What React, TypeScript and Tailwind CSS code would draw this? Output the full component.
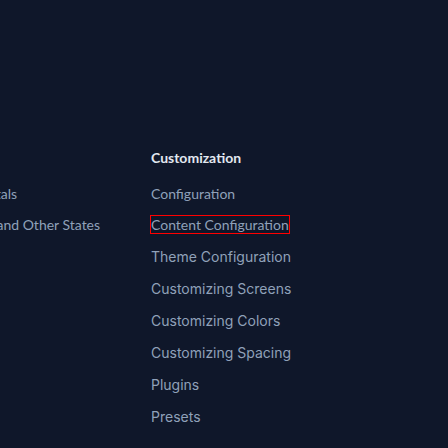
import React from "react";

const leftItems = ["Kit Fundamentals", "Hover, Focus, and Other States"];

const topItems = ["Configuration", "Content Configuration"];

const items = [
  "Theme Configuration",
  "Customizing Screens",
  "Customizing Colors",
  "Customizing Spacing",
  "Plugins",
  "Presets",
];

const App = () => {
  return (
    <div className="w-full h-screen overflow-hidden bg-[#0f172a] text-sm text-slate-400">
      <div className="flex pt-[148px]">
        <div className="shrink-0 w-[151px] overflow-hidden">
          <ul className="-ml-[90px] pt-[30px] whitespace-nowrap font-['Lato',sans-serif]">
            {leftItems.map((it) => (
              <li key={it} className="py-[6px] leading-[19px]">
                {it}
              </li>
            ))}
          </ul>
        </div>
        <div className="flex flex-col">
          <h5 className="font-['Lato',sans-serif] font-bold text-slate-200 leading-[19px] pb-[11px]">
            Customization
          </h5>
          <ul className="font-['Lato',sans-serif]">
            {topItems.map((it, i) => (
              <li key={it} className="py-[6px] leading-[19px]">
                <a
                  className={
                    i === 1
                      ? "outline outline-1 outline-[#ff0000] text-slate-400"
                      : "text-slate-400"
                  }
                >
                  {it}
                </a>
              </li>
            ))}
          </ul>
          <ul className="font-['Inter',sans-serif] pt-[1px]">
            {items.map((it) => (
              <li key={it} className="py-[6px] leading-5">
                {it}
              </li>
            ))}
          </ul>
        </div>
      </div>
    </div>
  );
};

export default App;
